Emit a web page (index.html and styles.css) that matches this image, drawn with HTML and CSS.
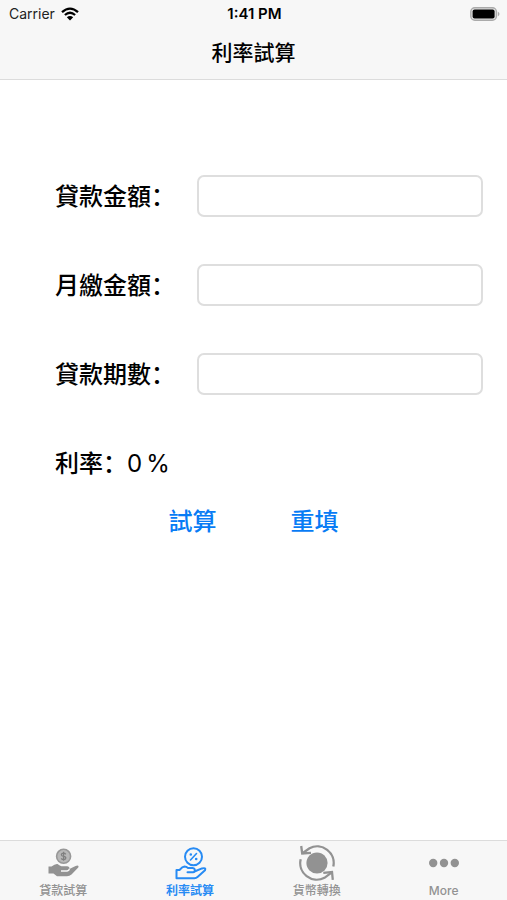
FILE: index.html
```html
<!DOCTYPE html>
<html lang="zh-Hant">
<head>
<meta charset="utf-8">
<meta name="viewport" content="width=device-width, initial-scale=1">
<title>利率試算</title>
<link rel="stylesheet" href="styles.css">
</head>
<body>
<header class="top">
  <div class="status">
    <div class="carrier">
      <span>Carrier</span>
      <svg class="wifi" viewBox="0 0 18 14" aria-hidden="true">
        <path d="M1 5.2Q9-2 17 5.2M3.9 8Q9 3.6 14.1 8" fill="none" stroke="#000" stroke-width="2.3"/>
        <path d="M5.8 10.2Q9 7.6 12.2 10.2L9 13.6Z"/>
      </svg>
    </div>
    <div class="time">1:41 PM</div>
    <svg class="battery" viewBox="0 0 30 14" aria-hidden="true">
      <rect x=".8" y=".8" width="25.6" height="12.4" rx="4" fill="#e4e4e4" stroke="#aaa" stroke-width="1.4"/>
      <rect x="2.6" y="2.6" width="22" height="8.8" rx="2" fill="#000"/>
      <path d="M27.8 4.6Q31.2 7 27.8 9.4Z" fill="#aaa"/>
    </svg>
  </div>
  <h1>利率試算</h1>
</header>
<main>
  <form class="form">
    <div class="row"><label for="amount">貸款金額<span lang="zh-Hans">：</span></label><input id="amount" type="text" inputmode="decimal"></div>
    <div class="row"><label for="monthly">月繳金額<span lang="zh-Hans">：</span></label><input id="monthly" type="text" inputmode="decimal"></div>
    <div class="row"><label for="periods">貸款期數<span lang="zh-Hans">：</span></label><input id="periods" type="text" inputmode="numeric"></div>
    <div class="result"><span class="result-name">利率<span lang="zh-Hans">：</span></span><output>0</output><span>%</span></div>
    <div class="actions"><button type="button">試算</button><button type="reset">重填</button></div>
  </form>
</main>
<nav class="tabs">
  <a href="#loan">
    <svg viewBox="0 0 40 36" aria-hidden="true">
      <circle cx="20.6" cy="11.3" r="7" fill="#b8b8b8" stroke="#989898" stroke-width="1.6"/>
      <path d="M22.8 9.3Q21.8 8 20.4 8.2Q18.2 8.4 18.4 10Q18.6 11.2 20.6 11.4Q22.9 11.7 22.8 13.1Q22.6 14.5 20.6 14.5Q19 14.5 18.3 13.3M20.6 6.8v9" fill="none" stroke="#808080" stroke-width="1.3"/>
      <path d="M5.5 21.6H8.5Q12 18.6 14.5 19Q17 20.8 18.5 21.2H24Q27 21.6 26.4 24L32.6 20.9Q36.6 19.8 35.3 22.6L28.5 29.6Q26.5 31.3 24 31.3H14L10.5 28.4H5.5Z" fill="#929292"/>
      <path d="M18 26H24Q26.3 25.6 26.3 23.8" fill="none" stroke="#f7f7f7" stroke-width="1.3"/>
    </svg>
    <span>貸款試算</span>
  </a>
  <a href="#rate" class="active" aria-current="page">
    <svg viewBox="0 0 40 36" fill="none" stroke="currentColor" stroke-width="2" stroke-linejoin="round" stroke-linecap="round" aria-hidden="true">
      <circle cx="23.5" cy="11.7" r="8.5"/>
      <path d="M26.5 8.5L20.5 15" stroke-width="1.6"/>
      <circle cx="20.8" cy="9.5" r=".6" stroke-width="1.4"/>
      <circle cx="26.2" cy="14" r=".6" stroke-width="1.4"/>
      <path d="M6.5 25H9.5Q12.5 21.8 14.5 21.6Q16.5 21.7 18 23H22.5Q25.6 23.4 24.5 26.5L32 23.4Q36.4 22.4 35 25.2L27.5 32Q26.2 33.2 24.5 33.2H6.5ZM17.5 27.2H23Q24.2 27.2 24.5 26.5"/>
    </svg>
    <span>利率試算</span>
  </a>
  <a href="#currency">
    <svg viewBox="0 0 40 36" aria-hidden="true">
      <circle cx="20" cy="18" r="10.6" fill="#929292"/>
      <g fill="none" stroke="#929292" stroke-width="2.3">
        <path d="M5.5 8.3L12.5 3.2A16.6 16.6 0 0 1 36.3 21.5M34.8 27.3L27.5 32.8A16.6 16.6 0 0 1 3.7 14.2"/>
        <path d="M4.2 1L5.2 8.5L14 7.8M35.8 34.8L35 27L26.3 27.9"/>
      </g>
    </svg>
    <span>貨幣轉換</span>
  </a>
  <a href="#more">
    <svg viewBox="0 0 40 36" fill="#929292" aria-hidden="true">
      <circle cx="9.2" cy="18" r="4.2"/><circle cx="20" cy="18" r="4.2"/><circle cx="30.8" cy="18" r="4.2"/>
    </svg>
    <span>More</span>
  </a>
</nav>
</body>
</html>
```
FILE: styles.css
```css
* { box-sizing: border-box; }

body {
  margin: 0;
  min-height: 100vh;
  display: flex;
  flex-direction: column;
  background: #fff;
  color: #000;
  font-family: Inter, "Noto Sans CJK TC", sans-serif;
}

:lang(zh-Hans) { font-family: "Noto Sans CJK SC", sans-serif; line-height: 1; }

.top {
  height: 80px;
  background: #f7f7f7;
  border-bottom: 1px solid #dcdcdc;
}

.status {
  display: grid;
  grid-template-columns: 1fr auto 1fr;
  align-items: center;
  height: 27px;
  padding: 0 7px 0 9px;
  font-size: 14px;
  line-height: 20px;
}

.carrier {
  display: flex;
  align-items: center;
  gap: 6px;
  color: #222;
}

.wifi { width: 18px; height: 14px; }
.time { font-size: 15px; font-weight: 600; }
.battery { width: 30px; height: 14px; justify-self: end; }

h1 {
  margin: 9px 0 0;
  font-size: 21px;
  line-height: 34px;
  font-weight: 500;
  text-align: center;
}

main { flex: 1; }

.form {
  display: flex;
  flex-direction: column;
  gap: 47px;
  padding: 95px 24px 0 55px;
  font-size: 24px;
}

.row { display: flex; align-items: center; }

.row label {
  flex: 0 0 142px;
  padding-top: 2px;
  line-height: 40px;
  font-weight: 500;
  white-space: nowrap;
}

.row input {
  flex: 1;
  min-width: 0;
  height: 42px;
  padding: 0 10px;
  border: 2px solid #dedede;
  border-radius: 7px;
  background: #fff;
  font: inherit;
}

.result {
  display: flex;
  align-items: center;
  line-height: 44px;
}

.result-name { font-weight: 500; }
.result output { margin-right: 4px; }

.actions {
  display: flex;
  justify-content: center;
  gap: 74px;
  margin: -32px 0 0 -31px;
}

.actions button {
  padding: 0;
  border: 0;
  background: none;
  color: #087cf5;
  font: inherit;
  font-weight: 500;
  line-height: 42px;
}

.tabs {
  display: grid;
  grid-template-columns: repeat(4, 1fr);
  height: 60px;
  background: #f7f7f7;
  border-top: 1px solid #dcdcdc;
}

.tabs a {
  display: flex;
  flex-direction: column;
  align-items: center;
  gap: 1px;
  padding-top: 4px;
  color: #929292;
  font-size: 12px;
  line-height: 18px;
  font-weight: 500;
  text-decoration: none;
}

.tabs svg { width: 40px; height: 36px; }
.tabs .active { color: #278bf4; font-weight: 700; }
```
